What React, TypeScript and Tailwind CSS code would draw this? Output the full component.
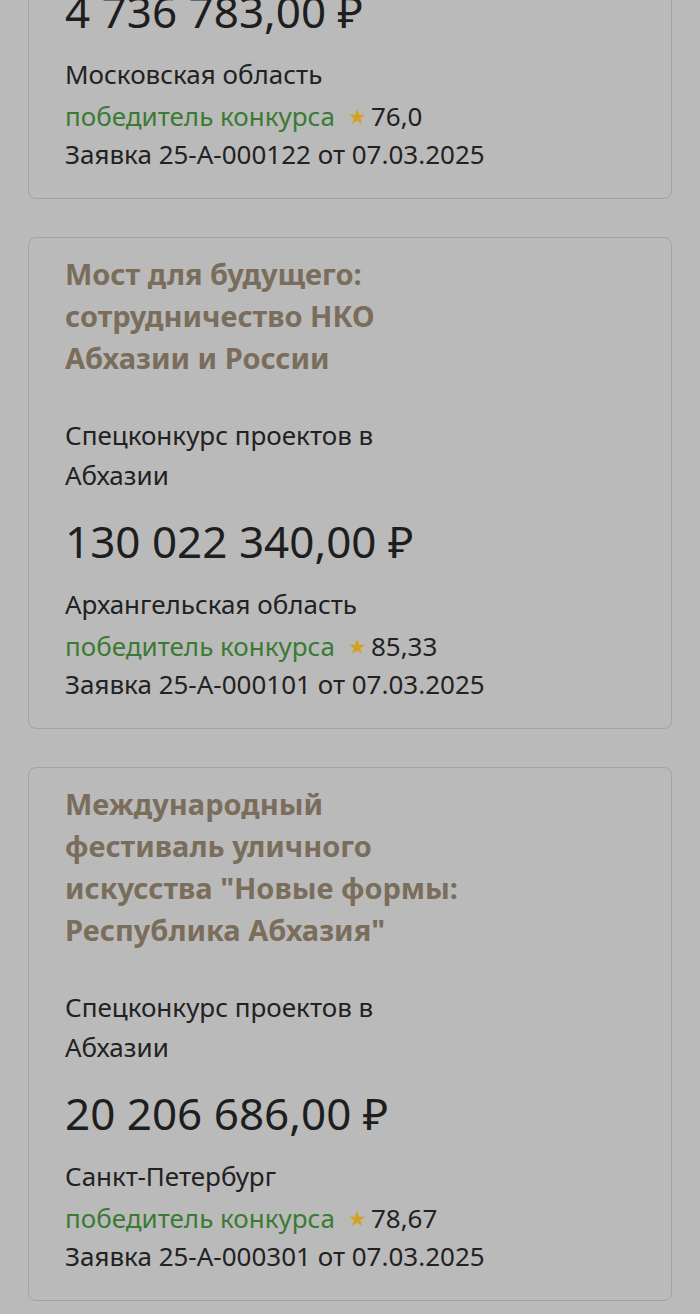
const font = { fontFamily: '"Noto Sans", "Liberation Sans", sans-serif' };

type Grant = {
  title?: string;
  contest?: string;
  amount: string;
  region: string;
  score: string;
  app: string;
};

const grants: Grant[] = [
  {
    title: "Мост для будущего: сотрудничество НКО Абхазии и России",
    contest: "Спецконкурс проектов в Абхазии",
    amount: "130 022 340,00 ₽",
    region: "Архангельская область",
    score: "85,33",
    app: "Заявка 25-А-000101 от 07.03.2025",
  },
  {
    title: 'Международный фестиваль уличного искусства "Новые формы: Республика Абхазия"',
    contest: "Спецконкурс проектов в Абхазии",
    amount: "20 206 686,00 ₽",
    region: "Санкт-Петербург",
    score: "78,67",
    app: "Заявка 25-А-000301 от 07.03.2025",
  },
];

function Card({ g }: { g: Grant }) {
  return (
    <div className="rounded-lg border border-[#a3a39f] px-[36px] pt-[15px] pb-[24px]">
      {g.title && (
        <div className="max-w-[405px] text-[29px] font-bold leading-[42px] text-[#7a6d5b]">
          {g.title}
        </div>
      )}
      {g.contest && (
        <div className="mt-[36px] max-w-[340px] text-[26px] leading-[40px] text-[#222]">
          {g.contest}
        </div>
      )}
      <div className={(g.title ? "mt-[18px] " : "") + "text-[44px] leading-[56px] text-[#1e1e1e]"}>
        {g.amount}
      </div>
      <div className="mt-[15px] text-[26px] leading-[40px] text-[#222]">{g.region}</div>
      <div className="mt-[2px] flex items-center text-[26px] leading-[40px]">
        <span className="text-[#3b7a34]">победитель конкурса</span>
        <span className="ml-[13px] text-[21px] text-[#d4a21c]">★</span>
        <span className="ml-[4px] text-[#222]">{g.score}</span>
      </div>
      <div className="mt-[-2px] text-[26px] leading-[40px] text-[#222]">{g.app}</div>
    </div>
  );
}

export default function App() {
  return (
    <div className="h-[1314px] overflow-hidden bg-[#bababa]" style={font}>
      <div className="mt-[-33px] flex flex-col gap-[38px] px-[28px]">
        <Card
          g={{
            amount: "4 736 783,00 ₽",
            region: "Московская область",
            score: "76,0",
            app: "Заявка 25-А-000122 от 07.03.2025",
          }}
        />
        {grants.map((g) => (
          <Card key={g.app} g={g} />
        ))}
      </div>
    </div>
  );
}
